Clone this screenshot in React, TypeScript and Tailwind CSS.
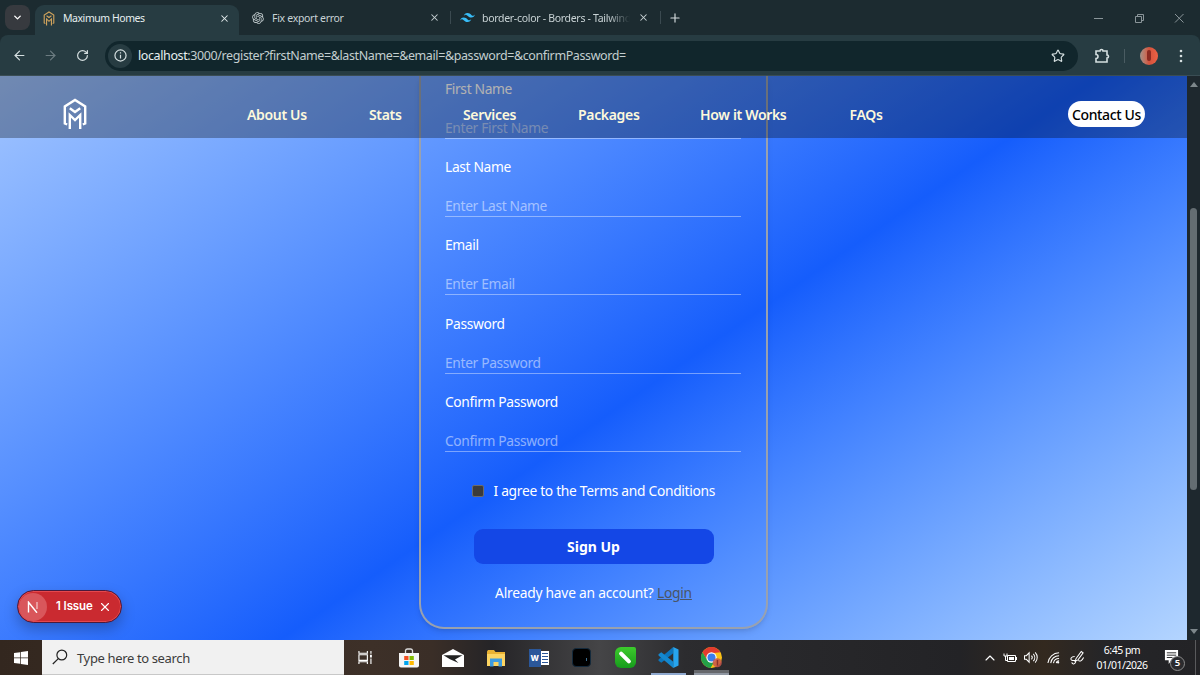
import type { ReactNode } from "react";
import { RiOpenaiFill } from "react-icons/ri";
import { SiTailwindcss } from "react-icons/si";
import { ArrowLeft, ArrowRight, ChevronDown, ChevronUp, Plus, RotateCw, Star, X } from "lucide-react";

const FIELDS = [
  { label: "First Name", placeholder: "Enter First Name" },
  { label: "Last Name", placeholder: "Enter Last Name" },
  { label: "Email", placeholder: "Enter Email" },
  { label: "Password", placeholder: "Enter Password" },
  { label: "Confirm Password", placeholder: "Confirm Password" },
];

const NAV = [
  { label: "About Us", cls: "w-[122px]" },
  { label: "Stats", cls: "w-[94px]" },
  { label: "Services", cls: "w-[115px]" },
  { label: "Packages", cls: "w-[122px]" },
  { label: "How it Works", cls: "w-[149.5px]" },
  { label: "FAQs", cls: "w-[40px]" },
];

function Logo({ className }: { className?: string }) {
  return (
    <svg viewBox="0 0 24 32" fill="none" stroke="currentColor" strokeWidth="2.4" className={className}>
      <path d="M4.200 26.500 1.800 25.500V8.500L12 2l10.200 6.500v17l-2.400 1" />
      <path d="m6.800 10.300 5.200 3.700 5.200-3.700" />
      <path d="M6.800 31V17l5.200 5 5.200-5v14" />
    </svg>
  );
}

function Tab({ icon, title, cls }: { icon: ReactNode; title: string; cls: string }) {
  return (
    <div className={"flex h-[35px] shrink-0 items-center text-[10.5px] text-[#c9d3d5] " + cls}>
      {icon}
      <span className="mt-[2px] ml-[7px] flex-1 overflow-hidden whitespace-nowrap">{title}</span>
      <X size={11} strokeWidth={2.2} className="ml-2 shrink-0" />
    </div>
  );
}

function BrowserChrome() {
  return (
    <div className="h-[76px] shrink-0 bg-[#1c2b30]">
      <div className="flex h-[35px] items-center">
        <div className="ml-[5px] flex h-[25px] w-[25px] items-center justify-center rounded-lg bg-[#373a3f] text-white">
          <ChevronDown size={11} strokeWidth={3} />
        </div>
        <div className="mt-[5px] ml-[5px] flex h-[30px] items-center rounded-t-[9px] bg-[#273c42] pb-[4px]">
          <Tab
            cls="w-[204px] pl-[7px] pr-[9px] text-[#e6eeef] tracking-[-0.45px]"
            title="Maximum Homes"
            icon={<Logo className="h-[15px] w-[14px] text-[#d0a35c]" />}
          />
        </div>
        <Tab
          cls="w-[201px] pl-[12px] tracking-[-0.3px]"
          title="Fix export error"
          icon={<RiOpenaiFill size={14} />}
        />
        <div className="ml-[10px] h-[13px] w-px bg-[#3b4a50]" />
        <Tab
          cls="w-[199px] pl-[9px] pr-[1px] [&>span]:[mask-image:linear-gradient(90deg,#000_85%,transparent)] [&>span]:tracking-[-0.3px]"
          title="border-color - Borders - Tailwind CSS"
          icon={<SiTailwindcss size={15} className="text-[#38bdf8]" />}
        />
        <div className="ml-[10px] h-[13px] w-px bg-[#3b4a50]" />
        <Plus size={14} strokeWidth={2} className="ml-[7px] text-[#d5dcdd]" />
        <svg viewBox="0 0 92 14" className="ml-auto mr-[15px] h-[14px] w-[92px]" fill="none" stroke="#8a9599">
          <path d="M1 7.5h9M42.5 5.5h6v6h-6zM44.5 5.500v-2h6v6h-2M82 3l8.500 8.500M90.500 3 82 11.500" />
        </svg>
      </div>
      <div className="flex h-[41px] items-center rounded-t-[8px] border-b border-[#3a4d54] bg-[#273c42] pt-px text-[#d5dfe0]">
        <ArrowLeft size={15} strokeWidth={1.9} className="ml-[12px]" />
        <ArrowRight size={15} strokeWidth={1.9} className="ml-[16px] text-[#6c7c81]" />
        <RotateCw size={13} strokeWidth={2.2} className="ml-[18px]" />
        <div className="ml-[16px] flex h-[30px] w-[973px] items-center rounded-full bg-[#11262c]">
          <div className="ml-[3px] flex size-[24px] items-center justify-center rounded-full bg-[#273c42]">
            <svg viewBox="0 0 14 14" className="size-[13px]" fill="none" stroke="currentColor" strokeWidth="1.3">
              <circle cx="7" cy="7" r="6" />
              <path d="M7 6.200v4M7 3.600v1.300" />
            </svg>
          </div>
          <span className="mt-[2px] ml-[6px] text-[12.5px] tracking-[-0.39px] text-[#c3cecf]">
            <span className="text-[#e8f0f0]">localhost</span>
            :3000/register?firstName=&amp;lastName=&amp;email=&amp;password=&amp;confirmPassword=
          </span>
          <Star size={14} strokeWidth={2} className="mr-[13px] ml-auto" />
        </div>
        <svg viewBox="0 0 16 16" className="ml-[16px] size-[16px]" fill="none" stroke="currentColor" strokeWidth="1.6">
          <path d="M2 3h4a1.500 1.500 0 0 1 3 0h4v4a1.500 1.500 0 0 1 0 3v4H2v-3.500a2 2 0 0 0 0-4z" />
        </svg>
        <div className="ml-[14px] h-[14px] w-px bg-[#4a5c62]" />
        <div className="ml-[15px] flex size-[18px] items-center justify-center rounded-full bg-linear-to-r from-[#a09088] via-[#d4523c] to-[#ee6245]">
          <div className="h-[11px] w-[4px] rounded-full bg-[#8c2a22]" />
        </div>
        <svg viewBox="0 0 4 14" className="ml-[21px] h-[14px] w-[4px]" fill="currentColor">
          <circle cx="2" cy="2" r="1.300" />
          <circle cx="2" cy="7" r="1.300" />
          <circle cx="2" cy="12" r="1.300" />
        </svg>
      </div>
    </div>
  );
}

function Header() {
  return (
    <header className="absolute inset-x-0 top-0 flex h-[62px] items-center bg-black/30 pt-[14px]">
      <Logo className="ml-[63px] h-[32px] w-[24px] text-white" />
      <nav className="ml-[160px] flex text-[14px] font-semibold tracking-[-0.33px] whitespace-nowrap text-[#fdf9dc]">
        {NAV.map((n) => (
          <a key={n.label} className={n.cls}>
            {n.label}
          </a>
        ))}
      </nav>
      <button className="mr-[42px] ml-auto h-[26px] w-[77px] rounded-full bg-white text-[14px] font-medium tracking-[-0.35px] whitespace-nowrap text-black">
        Contact Us
      </button>
    </header>
  );
}

function RegisterForm() {
  return (
    <form className="mx-auto h-[553px] w-[349px] rounded-b-[25px] border-2 border-t-0 border-gray-400 px-[24px] pt-[2.200px] text-[13.800px] tracking-[-0.35px] text-white shadow-md">
      <div className="flex flex-col gap-[17.150px]">
        {FIELDS.map((f) => (
          <label key={f.label} className="flex h-[61px] flex-col justify-between">
            <span className="h-[21px] leading-[21px]">{f.label}</span>
            <span className="h-[22px] w-[296px] border-b border-white/40 leading-[21px] text-white/50">
              {f.placeholder}
            </span>
          </label>
        ))}
      </div>
      <div className="mt-[28.500px] flex h-[21px] items-center pl-[26.500px] leading-[21px] tracking-[-0.300px]">
        <span className="size-[12px] rounded-[2px] border border-[#6b6b6b] bg-[#3b3b3b]" />
        <span className="ml-[10px] whitespace-nowrap">I agree to the Terms and Conditions</span>
      </div>
      <button className="mx-auto mt-[28px] block h-[35px] w-[240px] rounded-[9px] bg-[#1447e6] text-[14px] font-bold tracking-normal">
        Sign Up
      </button>
      <p className="mt-[18px] text-center leading-[21px] tracking-[-0.240px] whitespace-nowrap">
        Already have an account? <a className="text-gray-600 underline">Login</a>
      </p>
    </form>
  );
}

function IssueBadge() {
  return (
    <div className="absolute bottom-[17px] left-[17px] flex h-[33px] w-[105px] items-center rounded-full border border-[#4a1a3c] bg-[#ca2a30] text-white shadow-[inset_0_0_0_1px_#e5484d,0_6px_14px_rgba(0,0,0,0.25)]">
      <div className="ml-[1px] flex size-[28px] items-center justify-center rounded-full bg-[#d9565b]">
        <svg viewBox="0 0 12 12" className="size-[12px]" fill="none" stroke="white" strokeWidth="1.400">
          <path d="M1.500 11.500V1.200l8.500 10.600" />
          <path d="M10 1v7" strokeOpacity="0.600" />
        </svg>
      </div>
      <span className="ml-[9px] font-[Inter] text-[11.500px] font-semibold tracking-[-0.1px]">1 Issue</span>
      <X size={14} strokeWidth={1.900} className="ml-[5px]" />
    </div>
  );
}

function Page() {
  return (
    <div className="flex h-[564px] shrink-0">
      <main className="relative w-[1187px] overflow-hidden bg-[linear-gradient(145.500deg_in_oklab,#a2c5ff_0%,#155dfc_54.800%,#b4d5ff_100%)]">
        <RegisterForm />
        <Header />
        <IssueBadge />
      </main>
      <div className="flex w-[13px] flex-col items-center justify-between bg-[#1e282e] py-[6px]">
        <div className="border-x-4 border-b-[5px] border-x-transparent border-b-[#7d878b]" />
        <div className="mt-[-18px] h-[282px] w-[7px] rounded-full bg-[#646d72]" />
        <div className="border-x-4 border-t-[5px] border-x-transparent border-t-[#7d878b]" />
      </div>
    </div>
  );
}

function Slot({ children, active }: { children?: ReactNode; active?: boolean }) {
  return (
    <div className="relative flex h-full w-[43.250px] items-center justify-center">
      {children}
      {active && <div className="absolute bottom-0 h-[2px] w-[35px] bg-[#8fa9cf]" />}
    </div>
  );
}

function Taskbar() {
  return (
    <footer className="flex h-[35px] shrink-0 items-center bg-[linear-gradient(90deg,#33271f_0%,#3d3028_31%,#3a2e27_36%,#252427_41%,#454547_50%,#2c2c2f_57%,#29292c_62%,#232326_80%,#33291f_87%,#252528_92%,#232326_100%)] text-white">
      <div className="flex w-[42px] justify-center">
        <svg viewBox="0 0 14 14" className="size-[14px]" fill="white">
          <path d="M0 2 6.200 1.200v5.400H0zM6.900 1.100 14 0v6.600H6.900zM0 7.300h6.200v5.500L0 12zM6.900 7.300H14V14l-7.100-1z" />
        </svg>
      </div>
      <div className="flex h-full w-[302px] items-center border-b border-[#c8c8c8] bg-[#f1f1f1] text-[#3c3c3c]">
        <svg viewBox="0 0 16 16" className="ml-[10px] size-[16px]" fill="none" stroke="#222" strokeWidth="1.200">
          <circle cx="9.800" cy="6" r="4.900" />
          <path d="M6.300 9.600.8 15" />
        </svg>
        <span className="mt-[3px] ml-[9px] text-[13px] tracking-[-0.36px]">Type here to search</span>
      </div>
      <div className="flex h-full">
        <Slot>
          <svg viewBox="0 0 16 16" className="size-[15px]" fill="none" stroke="white" strokeWidth="1.200">
            <path d="M1 1v2.500h9V1M1 5h9v6H1zM1 15v-2.500h9V15M13.800 1v3M13.800 9v6" />
            <path d="M12.800 5h2v3h-2z" fill="white" stroke="none" />
          </svg>
        </Slot>
        <Slot>
          <svg viewBox="0 0 20 20" className="ml-px size-[20px]">
            <path d="M6.500 5V2.500A2 2 0 0 1 8.500 1h3a2 2 0 0 1 2 1.500V5" fill="none" stroke="#ddd" strokeWidth="1.300" />
            <path d="M0 5h20v12.500a2 2 0 0 1-2 2H2a2 2 0 0 1-2-2z" fill="#f5f5f5" />
            <path d="M5.200 8h4.300v4H5.200z" fill="#f25022" />
            <path d="M10.500 8h4.300v4h-4.300z" fill="#7fba00" />
            <path d="M5.200 13h4.300v4H5.200z" fill="#00a4ef" />
            <path d="M10.500 13h4.300v4h-4.300z" fill="#ffb900" />
          </svg>
        </Slot>
        <Slot>
          <svg viewBox="0 0 22 18" className="ml-px h-[18px] w-[22px]">
            <path d="M0 6 11 0l11 6v12H0z" fill="white" />
            <path d="M1.500 6.200h19L13 10.500l3.500 3.500L8 10.200z" fill="#222" />
          </svg>
        </Slot>
        <Slot>
          <svg viewBox="0 0 20 18" className="ml-px h-[18px] w-[20px]">
            <path d="M1 2.500 2 1h6l1.500 2H19v12H1z" fill="#e9b233" />
            <path d="M1 5h18v12H1z" fill="#fcd462" />
            <path d="M4 17.500V9.500h12v8h-3.500V13h-5v4.500z" fill="#3d9be0" />
          </svg>
        </Slot>
        <Slot>
          <div className="relative flex h-[18px] w-[20px]">
            <div className="flex h-full w-[12px] items-center justify-center bg-[#2b579a] font-[Inter] text-[8px] font-extrabold">
              W
            </div>
            <div className="my-[2px] flex w-[8px] flex-col justify-evenly bg-white pl-px">
              <i className="h-px w-[6px] bg-[#2b579a]" />
              <i className="h-px w-[6px] bg-[#2b579a]" />
              <i className="h-px w-[6px] bg-[#2b579a]" />
              <i className="h-px w-[6px] bg-[#2b579a]" />
            </div>
          </div>
        </Slot>
        <Slot>
          <div className="flex size-[19px] items-end justify-end rounded-[4px] border border-[#142a3c] bg-black pr-[3px] pb-[5px]">
            <i className="h-[3px] w-px bg-[#3f6f8f]" />
          </div>
        </Slot>
        <Slot>
          <div className="flex size-[21px] items-center justify-center rounded-[6px] rounded-tr-[2px] bg-linear-to-b from-[#3ccb2c] to-[#159c1c]">
            <div className="h-[15px] w-[4px] -rotate-45 rounded-full bg-white" />
          </div>
        </Slot>
        <Slot active>
          <svg viewBox="0 0 22 22" className="size-[21px]">
            <path d="M16 0v6.500L3.500 16.500.5 14.500V13z" fill="#0c76bd" />
            <path d="M16 22v-6.500L3.500 5.500.5 7.500V9z" fill="#1488cf" />
            <path d="M16 0 21.500 2.500v17L16 22z" fill="#27a5ee" />
          </svg>
        </Slot>
        <div className="relative flex h-full w-[43px] items-center justify-center">
          <div className="absolute bottom-0 h-[5px] w-[35px] border-b-2 border-[#9097a2] bg-[#66686c]" />
          <svg viewBox="0 0 22 22" className="relative size-[21px]">
            <circle cx="11" cy="11" r="11" fill="#fbc116" />
            <path d="M1.500 5.500A11 11 0 0 1 20.500 5.500L11 6.500 6.500 13.500z" fill="#e33b2e" />
            <path d="M1.500 5.500A11 11 0 0 0 10 22l5-8.500H6.500z" fill="#24a148" />
            <circle cx="11" cy="11" r="5.400" fill="white" />
            <circle cx="11" cy="11" r="4.200" fill="#3b7ded" />
            <circle cx="17" cy="16.500" r="4.800" fill="#c5544a" fillOpacity="0.850" />
            <path d="M16.500 13.500h1.500v6h-1.500z" fill="#8d2f2b" />
          </svg>
        </div>
      </div>
      <div className="ml-auto flex h-full items-center">
        <ChevronUp size={16} strokeWidth={1.700} />
        <svg viewBox="0 0 14 10" className="ml-[5px] h-[10px] w-[14px]" fill="none" stroke="white">
          <path d="M1 .5v2.500h3V.5M2.500 3v4.500H4M4.500 2.500h8v6h-8z" />
          <path d="M6 4h5v3H6zM12.500 4H14v3h-1.500z" fill="white" stroke="none" />
        </svg>
        <svg viewBox="0 0 16 14" className="ml-[6px] h-[13px] w-[16px]" fill="none" stroke="white" strokeWidth="1.100">
          <path d="M1 5h2l3-3v10L3 9H1zM8.500 5a3 3 0 0 1 0 4M10.500 3a6 6 0 0 1 0 8M12.500 1.500a8 8 0 0 1 0 11" />
        </svg>
        <svg viewBox="0 0 14 14" className="ml-[8px] size-[13px]" fill="none" stroke="white" strokeWidth="1.100">
          <path d="M1 13A12 12 0 0 1 13 2M4 13a9 9 0 0 1 9-8M7 13a6 6 0 0 1 6-5M10 13a3 3 0 0 1 3-2.500" />
          <circle cx="12" cy="12.300" r="1.200" fill="white" stroke="none" />
        </svg>
        <svg viewBox="0 0 16 16" className="ml-[10px] size-[15px]" fill="none" stroke="white" strokeWidth="1.100">
          <path d="M6.500 9 12 1.500l2 1.500-5.500 7.500-3 1.500zM5 7C1 7 0 10 2 11s5-1 4 2-4 2-4 0M9 11c2 2 4 0 5.500-3" />
        </svg>
        <div className="ml-[7px] w-[60px] text-center text-[10.500px] leading-[15px] tracking-[-0.5px]">
          <div>6:45 pm</div>
          <div>01/01/2026</div>
        </div>
        <div className="relative ml-[12px] h-[22px] w-[26px]">
          <svg viewBox="0 0 16 16" className="mt-[3px] size-[15px]">
            <path d="M1 0h14v11H8l-3 4v-4H1z" fill="white" />
            <path d="M3 3h10M3 5.500h10M3 8h6" stroke="#252528" />
          </svg>
          <span className="absolute right-[5px] bottom-[-2px] flex size-[15px] items-center justify-center rounded-full border border-[#8b8b8b] bg-[#2b2b2e] text-[9.500px] font-semibold">
            5
          </span>
        </div>
        <div className="ml-[5px] h-full w-px bg-[#5a5a5c]" />
        <div className="w-[4px]" />
      </div>
    </footer>
  );
}

export default function App() {
  return (
    <div className="flex h-[675px] w-[1200px] flex-col overflow-hidden font-['Noto_Sans','Open_Sans',sans-serif]">
      <BrowserChrome />
      <Page />
      <Taskbar />
    </div>
  );
}
